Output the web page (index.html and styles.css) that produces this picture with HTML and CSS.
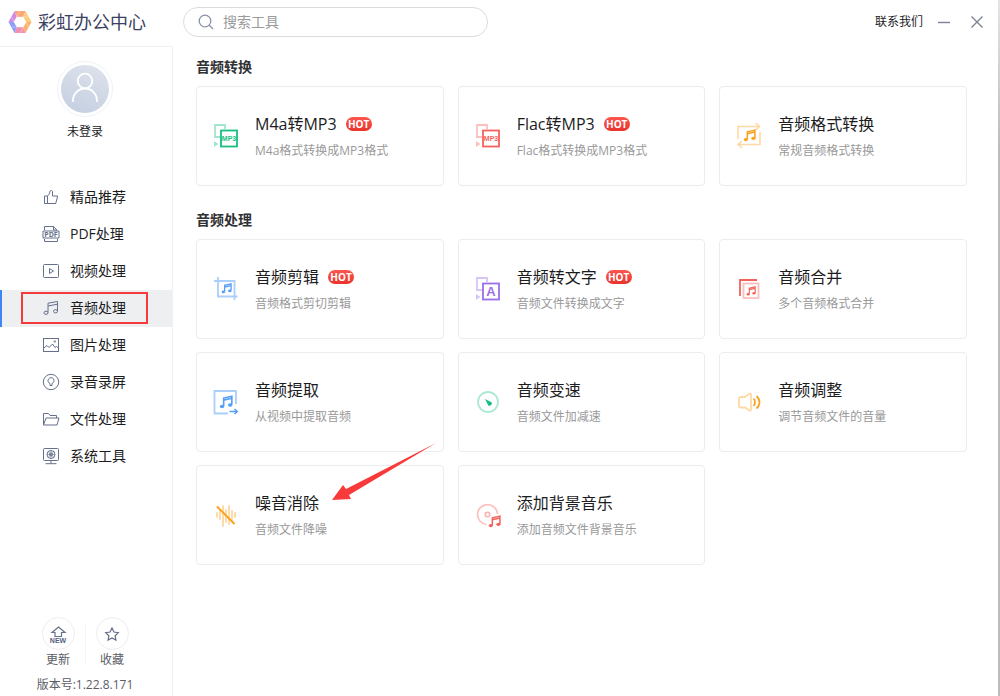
FILE: index.html
```html
<!DOCTYPE html>
<html lang="zh-CN">
<head>
<meta charset="utf-8">
<meta name="viewport" content="width=device-width, initial-scale=1">
<title>彩虹办公中心</title>
<link rel="stylesheet" href="styles.css">
</head>
<body>
<svg class="defs" aria-hidden="true">
  <symbol id="note" viewBox="0 0 12 12">
    <path d="M4 9.4V2.6L11 1v7.2M4 4.4l7-1.6" fill="none" stroke="currentColor" stroke-width="1.4"/>
    <ellipse cx="2.6" cy="9.8" rx="1.9" ry="1.5" fill="currentColor"/>
    <ellipse cx="9.6" cy="8.6" rx="1.9" ry="1.5" fill="currentColor"/>
  </symbol>
  <symbol id="convert" viewBox="0 0 26 26">
    <path d="M7 14H2V2h10v4" fill="none" stroke="currentColor" stroke-width="1.8" opacity=".4"/>
    <path d="M1 18l4.500 3L1 24z" fill="currentColor" opacity=".4"/>
    <rect x="8" y="7.500" width="16" height="16" fill="none" stroke="currentColor" stroke-width="1.800"/>
  </symbol>
</svg>
<div class="app">
  <aside class="sidebar">
    <div class="brand">
      <svg class="brand-logo" viewBox="0 0 24 24" aria-hidden="true">
        <path d="M6.500 1h11L15 7H9z" fill="#fba57a"/>
        <path d="M17.500 1l6 11H18L15 7z" fill="#fccb76"/>
        <path d="M23.500 12l-6 11L15 17l3-5z" fill="#fbb36c"/>
        <path d="M17.500 23h-11L9 17h6z" fill="#f58fb0"/>
        <path d="M6.500 23l-6-11H6l3 5z" fill="#8f9ff5"/>
        <path d="M.5 12l6-11L9 7l-3 5z" fill="#d18be0"/>
        <path d="M6 12l5.500-11M9 7h11M15 7l5.500 10M18 12l-5.500 11M15 17H4M9 17L3.500 7" fill="none" stroke="#fff" stroke-width=".5" opacity=".7"/>
        <path d="M9 7h6l3 5-3 5H9l-3-5z" fill="#fff"/>
      </svg>
      <span class="brand-name">彩虹办公中心</span>
    </div>
    <div class="panel">
      <button class="account" type="button">
        <span class="avatar">
          <svg viewBox="0 0 48 48" aria-hidden="true"><g fill="none" stroke="#fff" stroke-width="1.800"><circle cx="24" cy="16" r="7.300"/><path d="M12 37v-1.500a12 12 0 0 1 24 0V37"/></g></svg>
        </span>
        <span>未登录</span>
      </button>
      <nav class="nav">
        <a class="nav-item" href="#featured"><svg viewBox="0 0 18 18" aria-hidden="true"><path d="M2.500 8v7.500h11.200l2-7.500H10.500V3.600C10.500 2.600 8.600 2 8 3c-.3 3-1.500 4-2.500 5zM5.500 8v7.500"/></svg>精品推荐</a>
        <a class="nav-item" href="#pdf"><svg viewBox="0 0 18 18" aria-hidden="true"><path d="M2.500 5V1.500h9L15 5M11.500 1.500V5H15M2.500 14v2.500h13V14M1 6h16M1 13h16M1 6v7M17 6v7"/><text class="pdf-text" x="9" y="12">PDF</text></svg>PDF处理</a>
        <a class="nav-item" href="#video"><svg viewBox="0 0 18 18" aria-hidden="true"><rect x="1.500" y="2.500" width="15" height="13" rx="1"/><path d="M7.500 6.500v5l4-2.500z"/></svg>视频处理</a>
        <a class="nav-item is-active" href="#audio" aria-current="page"><svg viewBox="0 0 18 18" aria-hidden="true"><path d="M6 13.500V4.200L15.500 2.500v9.600M6 7l9.500-1.800"/><ellipse cx="4" cy="13.800" rx="2" ry="1.600"/><ellipse cx="13.500" cy="12.300" rx="2" ry="1.600"/></svg>音频处理</a>
        <a class="nav-item" href="#image"><svg viewBox="0 0 18 18" aria-hidden="true"><rect x="1.500" y="2.500" width="15" height="13"/><path d="M2 12l3-2.500 2 2L10.500 8l2.500 3.500 1.500-1 2 1.500"/><circle cx="12.800" cy="5.500" r=".7"/></svg>图片处理</a>
        <a class="nav-item" href="#record"><svg viewBox="0 0 18 18" aria-hidden="true"><circle cx="9" cy="9" r="7.700"/><path d="M8 10.500a3 3 0 1 1 2 0v2H8z"/></svg>录音录屏</a>
        <a class="nav-item" href="#file"><svg viewBox="0 0 18 18" aria-hidden="true"><path d="M1.500 15V3.500h5l1.500 2h6.500V8M1.500 15L4 8h13l-2 7z"/></svg>文件处理</a>
        <a class="nav-item" href="#system"><svg viewBox="0 0 18 18" aria-hidden="true"><rect x="1.500" y="1.500" width="15" height="12" rx="1"/><path d="M9 13.500v3M3.500 16.700h11"/><circle cx="9" cy="7.500" r="4"/><circle cx="9" cy="7.500" r="1.500"/><path d="M5 7.500h8M9 3.500v8M6.200 4.700l5.600 5.600M11.800 4.700l-5.600 5.600" stroke-width=".6"/></svg>系统工具</a>
      </nav>
      <div class="foot">
        <div class="foot-actions">
          <button class="foot-action" type="button"><span class="foot-icon"><svg viewBox="0 0 20 20" aria-hidden="true"><path d="M7 12.500V8.500H4L10.500 3 17 8.500h-3.500v4z"/><text class="new-text" x="10" y="19">NEW</text></svg></span>更新</button>
          <span class="foot-divider"></span>
          <button class="foot-action" type="button"><span class="foot-icon"><svg viewBox="0 0 20 20" aria-hidden="true"><path d="M10 4l1.900 4 4.400.6-3.200 3.100.8 4.400-3.900-2.100-3.900 2.100.8-4.400-3.200-3.100L8.100 8z"/></svg></span>收藏</button>
        </div>
        <div class="version">版本号:1.22.8.171</div>
      </div>
    </div>
  </aside>
  <main class="main">
    <header class="topbar">
      <label class="search">
        <svg viewBox="0 0 16 16" aria-hidden="true"><circle cx="7" cy="7" r="5.800"/><path d="M11 11l4 4"/></svg>
        <input type="search" placeholder="搜索工具" aria-label="搜索工具">
      </label>
      <a class="contact" href="#contact">联系我们</a>
      <button class="window-button" type="button" aria-label="最小化"><svg viewBox="0 0 14 14" aria-hidden="true"><path d="M1 7.500h12"/></svg></button>
      <button class="window-button" type="button" aria-label="关闭"><svg viewBox="0 0 14 14" aria-hidden="true"><path d="M1.500 1.500l11 11M12.500 1.500l-11 11"/></svg></button>
    </header>
    <div class="content">
      <section class="group">
        <h2>音频转换</h2>
        <div class="cards">
          <a class="card" href="#m4a"><svg class="card-icon green" viewBox="0 0 26 26" aria-hidden="true"><use href="#convert"/><text class="mp3-text" x="16" y="18">MP3</text></svg><span class="card-text"><span class="card-title">M4a转MP3<span class="hot">HOT</span></span><span class="card-desc">M4a格式转换成MP3格式</span></span></a>
          <a class="card" href="#flac"><svg class="card-icon red" viewBox="0 0 26 26" aria-hidden="true"><use href="#convert"/><text class="mp3-text" x="16" y="18">MP3</text></svg><span class="card-text"><span class="card-title">Flac转MP3<span class="hot">HOT</span></span><span class="card-desc">Flac格式转换成MP3格式</span></span></a>
          <a class="card" href="#format"><svg class="card-icon orange" viewBox="0 0 26 26" aria-hidden="true"><path d="M2 16V3.500h21M19.500 0l4 3.500-4 3.500M24 9v12.500H2M6 18l-4 3.500L6 25" fill="none" stroke="currentColor" stroke-width="1.600" opacity=".4"/><use href="#note" x="7" y="6" width="13" height="13"/></svg><span class="card-text"><span class="card-title">音频格式转换</span><span class="card-desc">常规音频格式转换</span></span></a>
        </div>
      </section>
      <section class="group">
        <h2>音频处理</h2>
        <div class="cards">
          <a class="card" href="#cut"><svg class="card-icon blue" viewBox="0 0 26 26" aria-hidden="true"><path d="M1 5h20.500v19M5 1v19.500h19.500" fill="none" stroke="currentColor" stroke-width="1.800" opacity=".5"/><use href="#note" x="8" y="7" width="11" height="11"/></svg><span class="card-text"><span class="card-title">音频剪辑<span class="hot">HOT</span></span><span class="card-desc">音频格式剪切剪辑</span></span></a>
          <a class="card" href="#text"><svg class="card-icon purple" viewBox="0 0 26 26" aria-hidden="true"><use href="#convert"/><text class="letter-text" x="16" y="20">A</text></svg><span class="card-text"><span class="card-title">音频转文字<span class="hot">HOT</span></span><span class="card-desc">音频文件转换成文字</span></span></a>
          <a class="card" href="#merge"><svg class="card-icon red" viewBox="0 0 26 26" aria-hidden="true"><path d="M4 20V4h17" fill="none" stroke="currentColor" stroke-width="1.800"/><rect x="7.500" y="7.500" width="15" height="14.500" fill="none" stroke="currentColor" stroke-width="1.800" opacity=".4"/><use href="#note" x="10" y="10" width="10" height="10"/></svg><span class="card-text"><span class="card-title">音频合并</span><span class="card-desc">多个音频格式合并</span></span></a>
          <a class="card" href="#extract"><svg class="card-icon blue" viewBox="0 0 26 26" aria-hidden="true"><path d="M23 15V2H1.500v22.500H15" fill="none" stroke="currentColor" stroke-width="1.800" opacity=".5"/><path d="M16.500 22.500h7M21.500 20l2.800 2.500-2.800 2.500" fill="none" stroke="currentColor" stroke-width="1.500"/><use href="#note" x="6" y="6" width="14" height="14"/></svg><span class="card-text"><span class="card-title">音频提取</span><span class="card-desc">从视频中提取音频</span></span></a>
          <a class="card" href="#speed"><svg class="card-icon green" viewBox="0 0 26 26" aria-hidden="true"><circle cx="13" cy="13" r="10" fill="none" stroke="currentColor" stroke-width="1.800" opacity=".35"/><path d="M10 10l6.500 3.200c1.500 1.700-1.500 4.600-3.200 3.200z" fill="currentColor"/></svg><span class="card-text"><span class="card-title">音频变速</span><span class="card-desc">音频文件加减速</span></span></a>
          <a class="card" href="#volume"><svg class="card-icon orange" viewBox="0 0 26 26" aria-hidden="true"><path d="M3 9.500c0-1 .5-1.500 1.500-1.500H9l4.500-3.500c1-.5 1.500 0 1.500 1v15c0 1-.5 1.500-1.500 1L9 18.500H4.500c-1 0-1.500-.5-1.500-1.500z" fill="none" stroke="currentColor" stroke-width="1.800" opacity=".4"/><path d="M17.500 9.500c2 2 2 5.500 0 7.500M20.500 7c4 3.500 4 9 0 12.500" fill="none" stroke="currentColor" stroke-width="1.700"/></svg><span class="card-text"><span class="card-title">音频调整</span><span class="card-desc">调节音频文件的音量</span></span></a>
          <a class="card" href="#denoise"><svg class="card-icon orange" viewBox="0 0 26 26" aria-hidden="true"><path d="M4 11v4M7 8v9M10 4v20M13 8v12M16 4v18M19 9v10M22 11v4" fill="none" stroke="currentColor" stroke-width="1.900" stroke-linecap="round" opacity=".4"/><path d="M4.500 5L21 21.500" stroke="currentColor" stroke-width="1.900" stroke-linecap="round"/></svg><span class="card-text"><span class="card-title">噪音消除</span><span class="card-desc">音频文件降噪</span></span><svg class="arrow" viewBox="0 0 104 58" aria-hidden="true"><path d="M0 57L11 42l3 4L104 0 17 52l2 4z"/></svg></a>
          <a class="card" href="#background"><svg class="card-icon red" viewBox="0 0 26 26" aria-hidden="true"><path d="M11.500 22.500A10 10 0 1 1 22.500 12" fill="none" stroke="currentColor" stroke-width="1.700" opacity=".4"/><circle cx="12.500" cy="12.500" r="2.300" fill="none" stroke="currentColor" stroke-width="1.500" opacity=".5"/><use href="#note" x="13" y="13" width="13" height="13"/></svg><span class="card-text"><span class="card-title">添加背景音乐</span><span class="card-desc">添加音频文件背景音乐</span></span></a>
        </div>
      </section>
    </div>
  </main>
  <div class="window-edge"></div>
</div>
</body>
</html>
```
FILE: styles.css
```css
* { box-sizing: border-box; }

body {
  margin: 0;
  font-family: "Open Sans", "Noto Sans CJK SC", sans-serif;
  font-size: 12px;
  line-height: 18px;
  color: #1c1c1e;
  background: #fff;
}

a { color: inherit; text-decoration: none; }

button {
  padding: 0;
  border: 0;
  background: none;
  font: inherit;
  color: inherit;
  cursor: pointer;
}

.defs { position: absolute; width: 0; height: 0; }

.app {
  display: grid;
  grid-template-columns: 173px 1fr 2px;
  min-height: 100vh;
}

/* Sidebar */
.sidebar { display: flex; flex-direction: column; }

.brand {
  display: flex;
  align-items: center;
  gap: 6px;
  height: 46px;
  padding: 0 0 2px 8px;
}
.brand-logo { width: 24px; height: 24px; }
.brand-name { font-size: 18px; line-height: 26px; color: #3b4261; }

.panel {
  flex: 1;
  display: flex;
  flex-direction: column;
  border-top: 1px solid #f0f0f2;
  border-right: 1px solid #f0f0f2;
}

.account {
  display: flex;
  flex-direction: column;
  align-items: center;
  gap: 6px;
  margin: 14px 2px 0 0;
}
.avatar {
  width: 56px;
  height: 56px;
  padding: 3px;
  border: 1px solid #f0f2f6;
  border-radius: 50%;
}
.avatar svg {
  display: block;
  width: 48px;
  height: 48px;
  border-radius: 50%;
  background: linear-gradient(20deg, #c3cee0, #dfe3ec);
}

.nav { margin-top: 38px; }
.nav-item {
  position: relative;
  display: flex;
  align-items: center;
  gap: 10px;
  height: 37px;
  padding: 0 0 1px 42px;
  font-size: 14px;
}
.nav-item svg {
  width: 18px;
  height: 18px;
  fill: none;
  stroke: #65708c;
}
.nav-item .pdf-text {
  font-size: 7px;
  font-weight: 700;
  text-anchor: middle;
  fill: #65708c;
  stroke: none;
}
.nav-item.is-active {
  background: #eeeff1;
  box-shadow: inset 2px 0 #3f85f5;
}
.nav-item.is-active::after {
  content: "";
  position: absolute;
  inset: 2px 24px 3px 21px;
  border: 2px solid #f53b3c;
}

.foot { margin-top: auto; padding: 0 2px 2px 0; color: #5a5d66; }
.foot-actions {
  display: flex;
  align-items: center;
  justify-content: center;
  gap: 10px;
}
.foot-action {
  display: flex;
  flex-direction: column;
  align-items: center;
  gap: 1px;
}
.foot-icon {
  display: grid;
  place-items: center;
  width: 33px;
  height: 33px;
  border: 1px solid #ededf0;
  border-radius: 50%;
}
.foot-icon svg {
  width: 20px;
  height: 20px;
  fill: none;
  stroke: #65708c;
  stroke-width: 1.2;
}
.foot-icon .new-text {
  font: 700 7px "Liberation Sans", sans-serif;
  text-anchor: middle;
  fill: #56617f;
  stroke: none;
}
.foot-divider { width: 1px; height: 40px; background: #f4f4f6; }
.version { margin-top: 7px; text-align: center; }

/* Main area */
.main { min-width: 0; }

.topbar {
  display: flex;
  align-items: center;
  height: 43px;
  padding: 0 14px 0 10px;
}
.search {
  display: flex;
  align-items: center;
  gap: 9px;
  width: 305px;
  height: 30px;
  margin-right: auto;
  padding: 0 14px;
  border: 1px solid #dcdcde;
  border-radius: 15px;
}
.search svg {
  width: 16px;
  height: 16px;
  fill: none;
  stroke: #8a93ab;
  stroke-width: 1.3;
}
.search input {
  flex: 1;
  min-width: 0;
  padding: 0;
  border: 0;
  outline: 0;
  background: none;
  font: inherit;
  font-size: 14px;
}
.search input::placeholder { color: #9a9a9a; opacity: 1; }
.contact { margin-right: 14px; }
.window-button { width: 14px; height: 14px; }
.window-button + .window-button { margin-left: 19px; }
.window-button svg {
  display: block;
  fill: none;
  stroke: #7d8494;
  stroke-width: 1.4;
}

.content { padding: 14px 31px 30px 23px; }
.group + .group { margin-top: 24px; }
.group h2 {
  margin: 0 0 9px;
  font-size: 14px;
  line-height: 20px;
  font-weight: 700;
  color: #303133;
}
.cards {
  display: grid;
  grid-template-columns: repeat(3, 1fr);
  gap: 13px 14px;
}
.card {
  position: relative;
  display: flex;
  align-items: center;
  gap: 16px;
  min-height: 100px;
  padding: 0 16px;
  border: 1px solid #ececee;
  border-radius: 4px;
}
.card-icon { flex: none; width: 26px; height: 26px; }
.card-text { display: flex; flex-direction: column; gap: 6px; }
.card-title {
  display: flex;
  align-items: center;
  gap: 9px;
  font-size: 16px;
  line-height: 24px;
}
.card-desc { color: #999; }
.hot {
  width: 26px;
  height: 14px;
  border-radius: 7px;
  background: linear-gradient(#fb5750, #e8342c);
  font-size: 10px;
  line-height: 14px;
  font-weight: 700;
  text-align: center;
  color: #fff;
}

.green { color: #16bf80; }
.red { color: #f4625d; }
.orange { color: #fba01d; }
.blue { color: #559ff8; }
.purple { color: #9b6fe8; }

.mp3-text {
  font: 700 7px "Liberation Sans", sans-serif;
  text-anchor: middle;
  fill: currentColor;
}
.letter-text {
  font: 700 13px "Liberation Sans", sans-serif;
  text-anchor: middle;
  fill: currentColor;
}

.arrow {
  position: absolute;
  top: -23px;
  left: 135px;
  z-index: 1;
  width: 104px;
  height: 58px;
  fill: #f93a3a;
}

.window-edge { background: linear-gradient(#e4e4e4, #bcbcbc 150px); }
```
